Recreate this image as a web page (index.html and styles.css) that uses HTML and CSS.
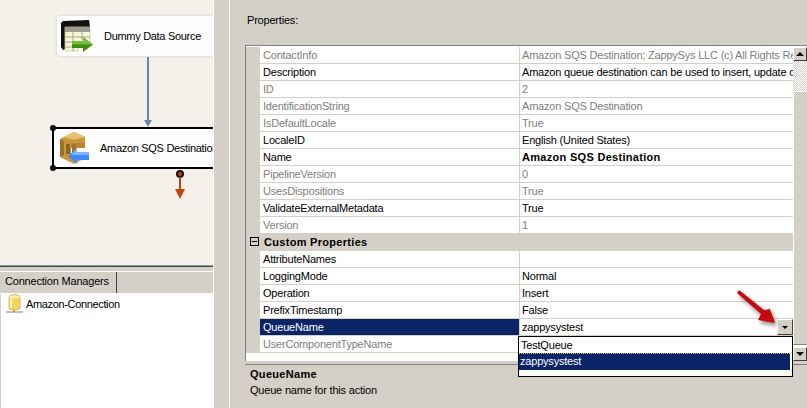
FILE: index.html
```html
<!DOCTYPE html>
<html lang="en">
<head>
<meta charset="utf-8">
<title>Amazon SQS Destination</title>
<link rel="stylesheet" href="styles.css">
</head>
<body>
<div class="app">
  <section class="left">
    <div class="canvas">
      <div class="node node-src">
        <svg class="node-icon" width="34" height="34" viewBox="0 0 34 34">
          <path d="M0 4 L2 2 L28 1 L29 8 H4 V30 L2 31 L0 28 Z" fill="#111"/>
          <path d="M4 8 H29 V24 H17 V32 H4 Z" fill="#f8f6d8" stroke="#c9c68c" stroke-width=".8"/>
          <path d="M4 8 H29 V13 H4 Z" fill="#9c9c94"/>
          <path d="M4 18 H29 M4 23 H16 M4 28 H16 M12 8 V32 M21 8 V21" stroke="#a8a68a" stroke-width="1" fill="none"/>
          <path d="M11 22 H22 V18 L32 25.500 L22 33 V29 H11 Z" fill="#3f8a12"/>
          <path d="M22 18 L32 25.500 H11 V22 H22 Z" fill="#7cbb42"/>
        </svg>
        <span class="node-text">Dummy Data Source</span>
      </div>
      <div class="link-blue"></div>
      <div class="link-blue-head"></div>
      <div class="node node-dst">
        <svg class="node-icon" width="32" height="34" viewBox="0 0 32 34">
          <path d="M2 8 L16 1 L27 6 V12 H13 V25 H27 V27 L16 33 L2 26 Z" fill="#c8973c"/>
          <path d="M16 1 L27 6 L16 9 L5 6 Z" fill="#e6c06f"/>
          <path d="M2 8 L6 10 V24 L2 26 Z" fill="#99702a"/>
          <path d="M8 13 H12 V23 H8 Z" fill="#8a6526"/>
          <path d="M13 12 H27 V17 H13 Z" fill="#b5862f"/>
          <path d="M14 13 H18 V22 H14 Z" fill="#9c7328"/>
          <path d="M31 21 V29 H19 V33 L10 25 L19 17 V21 Z" fill="#3d8bff"/>
          <path d="M31 21 V24 H13 L19 17 V21 Z" fill="#7db4ff"/>
        </svg>
        <span class="node-text">Amazon SQS Destination</span>
      </div>
      <span class="handle handle-top"></span>
      <span class="handle handle-bottom"></span>
      <span class="out-dot"></span>
      <div class="link-red"></div>
      <div class="link-red-head"></div>
    </div>
    <div class="pane-rule"></div>
    <div class="tabstrip"><div class="tab">Connection Managers</div></div>
    <div class="conn-list">
      <div class="conn-item">
        <svg width="19" height="19" viewBox="0 0 19 19">
          <path d="M1 18 H18" stroke="#9aa4bd" stroke-width="1.4"/>
          <path d="M9 14 V18" stroke="#d69b1e" stroke-width="2"/>
          <path d="M4 3 C4 0 15 0 15 3 V14 C15 16.500 4 16.500 4 14 Z" fill="#f2d35e" stroke="#caa12c" stroke-width=".7"/>
          <path d="M4 3 C4 5 15 5 15 3 C15 1 4 1 4 3 Z" fill="#fbf2b0"/>
          <path d="M6 5 V14" stroke="#fcf4bf" stroke-width="2"/>
        </svg>
        <span>Amazon-Connection</span>
      </div>
    </div>
  </section>
  <div class="splitter"></div>
  <section class="right">
    <div class="props-label">Properties:</div>
    <div class="grid">
      <div class="grid-rows">
        <div class="row ro"><div class="name">ContactInfo</div><div class="val">Amazon SQS Destination; ZappySys LLC (c) All Rights Reserved</div></div>
        <div class="row"><div class="name">Description</div><div class="val">Amazon queue destination can be used to insert, update or delete</div></div>
        <div class="row ro"><div class="name">ID</div><div class="val">2</div></div>
        <div class="row ro"><div class="name">IdentificationString</div><div class="val">Amazon SQS Destination</div></div>
        <div class="row ro"><div class="name">IsDefaultLocale</div><div class="val">True</div></div>
        <div class="row"><div class="name">LocaleID</div><div class="val">English (United States)</div></div>
        <div class="row"><div class="name">Name</div><div class="val strong">Amazon SQS Destination</div></div>
        <div class="row ro"><div class="name">PipelineVersion</div><div class="val">0</div></div>
        <div class="row ro"><div class="name">UsesDispositions</div><div class="val">True</div></div>
        <div class="row"><div class="name">ValidateExternalMetadata</div><div class="val">True</div></div>
        <div class="row ro"><div class="name">Version</div><div class="val">1</div></div>
        <div class="cat"><span class="minus"></span><span class="cat-name">Custom Properties</span></div>
        <div class="row"><div class="name">AttributeNames</div><div class="val"></div></div>
        <div class="row"><div class="name">LoggingMode</div><div class="val">Normal</div></div>
        <div class="row"><div class="name">Operation</div><div class="val">Insert</div></div>
        <div class="row"><div class="name">PrefixTimestamp</div><div class="val">False</div></div>
        <div class="row selected"><div class="name">QueueName</div><div class="val">zappysystest<span class="combo-btn"><i class="tri"></i></span></div></div>
        <div class="row ro"><div class="name">UserComponentTypeName</div><div class="val"></div></div>
      </div>
      <div class="scrollbar">
        <div class="sb-btn"><i class="tri up"></i></div>
        <div class="sb-track"></div>
        <div class="sb-thumb"></div>
        <div class="sb-btn"><i class="tri big"></i></div>
      </div>
    </div>
    <div class="help">
      <div class="help-title">QueueName</div>
      <div class="help-text">Queue name for this action</div>
    </div>
    <div class="dropdown">
      <div class="opt">TestQueue</div>
      <div class="opt opt-sel">zappysystest</div>
    </div>
    <svg class="callout" width="48" height="42" viewBox="0 0 48 42">
      <path d="M2 0 L27 20 L33 19 L38 33 L21 30 L24 24 L0 3 Z" fill="#c5090f"/>
    </svg>
  </section>
</div>
</body>
</html>
```
FILE: styles.css
```css
* { box-sizing: border-box; }
html, body { margin: 0; height: 100%; }
body { overflow: hidden; background: #d4d0c8; font-family: "Liberation Sans", Arial, sans-serif; font-size: 11px; letter-spacing: -.2px; color: #000; }
.app { display: flex; width: 807px; height: 408px; }

.left { width: 213px; flex: none; display: flex; flex-direction: column; }
.canvas { position: relative; height: 265px; flex: none; background: #f4f1ea; overflow: hidden; }
.node { position: absolute; left: 57px; top: 16px; width: 170px; height: 40px; display: flex; align-items: center; background: #fdfdfe; border-radius: 3px 0 0 3px; box-shadow: 0 0 3px #c9c6bd; }
.node-icon { flex: none; margin-left: 4px; }
.node-text { margin-left: 9px; white-space: nowrap; letter-spacing: -.3px; }
.node-dst { left: 52px; top: 127px; height: 42px; border: 2px solid #000; border-radius: 0; box-shadow: none; }
.node-dst .node-icon { margin-left: 4px; }
.node-dst .node-text { margin-left: 10px; }
.link-blue { position: absolute; left: 147px; top: 57px; width: 2px; height: 64px; background: #6a85ac; }
.link-blue-head { position: absolute; left: 144px; top: 120px; width: 0; height: 0; border-left: 4px solid transparent; border-right: 4px solid transparent; border-top: 7px solid #6a85ac; }
.handle { position: absolute; left: 50px; width: 6px; height: 6px; border-radius: 50%; background: #000; }
.handle-top { top: 125px; }
.handle-bottom { top: 165px; }
.out-dot { position: absolute; left: 176px; top: 170px; width: 8px; height: 8px; border-radius: 50%; background: #c2410f; border: 2px solid #111; }
.link-red { position: absolute; left: 179px; top: 177px; width: 2px; height: 13px; background: #c2410f; }
.link-red-head { position: absolute; left: 175px; top: 189px; width: 0; height: 0; border-left: 5px solid transparent; border-right: 5px solid transparent; border-top: 10px solid #c2410f; }

.pane-rule { height: 2px; flex: none; background: #3f4f55; border-top: 1px solid #7f9aa0; }
.tabstrip { position: relative; height: 27px; flex: none; padding-top: 5px; background: #d4d0c8; border-bottom: 1px solid #fff; }
.tabstrip::before { content: ""; position: absolute; left: 0; right: 0; top: 4px; height: 1px; background: #fff; }
.tab { width: 117px; height: 21px; padding: 3px 0 0 5px; border-right: 1px solid #404040; white-space: nowrap; }
.conn-list { flex: 1; background: #fff; border-left: 1px solid #d4d0c8; padding: 0 0 0 4px; letter-spacing: -.35px; }
.conn-item { display: flex; align-items: center; gap: 2px; white-space: nowrap; }

.splitter { width: 17px; flex: none; border-left: 1px solid #fff; border-right: 1px solid #fff; background: #d4d0c8; }

.right { position: relative; flex: 1; min-width: 0; display: flex; flex-direction: column; background: #d4d0c8; padding-top: 14px; }
.props-label { margin-left: 17px; height: 31px; line-height: 13px; }
.grid { display: flex; margin-left: 15px; height: 316px; border-top: 1px solid #808080; border-left: 1px solid #808080; padding-top: 1px; background: #fff; }
.grid-rows { width: 547px; flex: none; overflow: hidden; }
.row { display: flex; height: 17px; background: #d4d0c8; padding-left: 14px; }
.name { width: 259px; flex: none; height: 16px; padding-left: 3px; line-height: 16px; background: #fff; white-space: nowrap; }
.val { position: relative; flex: 1; min-width: 0; margin-left: 1px; height: 16px; padding-left: 2px; line-height: 16px; background: #fff; white-space: nowrap; overflow: hidden; }
.strong { font-weight: 700; letter-spacing: .3px; }
.ro .name, .ro .val { color: #808080; }
.selected .name { background: #0a2468; color: #fff; }
.cat { display: flex; align-items: center; height: 17px; padding-bottom: 2px; background: #d4d0c8; }
.cat-name { font-weight: 700; margin-left: 5px; letter-spacing: .3px; }
.minus { position: relative; width: 9px; height: 9px; margin-left: 4px; flex: none; border: 1px solid #000; }
.minus::after { content: ""; position: absolute; left: 1px; top: 3px; width: 5px; height: 1px; background: #000; }
.combo-btn { position: absolute; right: 0; top: 0; width: 16px; height: 16px; display: flex; align-items: center; justify-content: center; background: #d4d0c8; border: 1px solid; border-color: #fff #404040 #404040 #fff; }
.tri { display: block; width: 0; height: 0; border-left: 3px solid transparent; border-right: 3px solid transparent; border-top: 3px solid #000; }
.tri.big { border-left-width: 4px; border-right-width: 4px; border-top-width: 4px; }
.tri.up { border-left-width: 4px; border-right-width: 4px; border-top: 0; border-bottom: 4px solid #000; }
.scrollbar { flex: 1; display: flex; flex-direction: column; }
.sb-btn { height: 14px; flex: none; display: flex; align-items: center; justify-content: center; background: #d4d0c8; border: 1px solid; border-color: #fff #404040 #404040 #fff; }
.sb-track { height: 30px; flex: none; background: repeating-conic-gradient(#d4d0c8 0 25%, #fff 0 50%) 0 0 / 2px 2px; }
.sb-thumb { flex: 1; margin-bottom: 2px; background: #d4d0c8; border: 1px solid; border-color: #fff #d4d0c8 #808080 #fff; }
.help { margin: 3px 0 0 15px; flex: 1; border-top: 1px solid #808080; padding: 1px 0 0 5px; line-height: 16px; }
.help-title { font-weight: 700; letter-spacing: .3px; }

.dropdown { position: absolute; left: 288px; top: 336px; width: 275px; height: 41px; background: #fff; border: 1px solid #000; }
.opt { height: 17px; padding-left: 2px; line-height: 16px; }
.opt-sel { background: #0a2468; color: #fff; width: 271px; height: 17px; padding-left: 1px; line-height: 14px; border-top: 1px dotted #d4c060; margin-top: -1px; }
.callout { position: absolute; left: 507px; top: 290px; filter: drop-shadow(2px 3px 2px rgba(0, 0, 0, .45)); }
```
